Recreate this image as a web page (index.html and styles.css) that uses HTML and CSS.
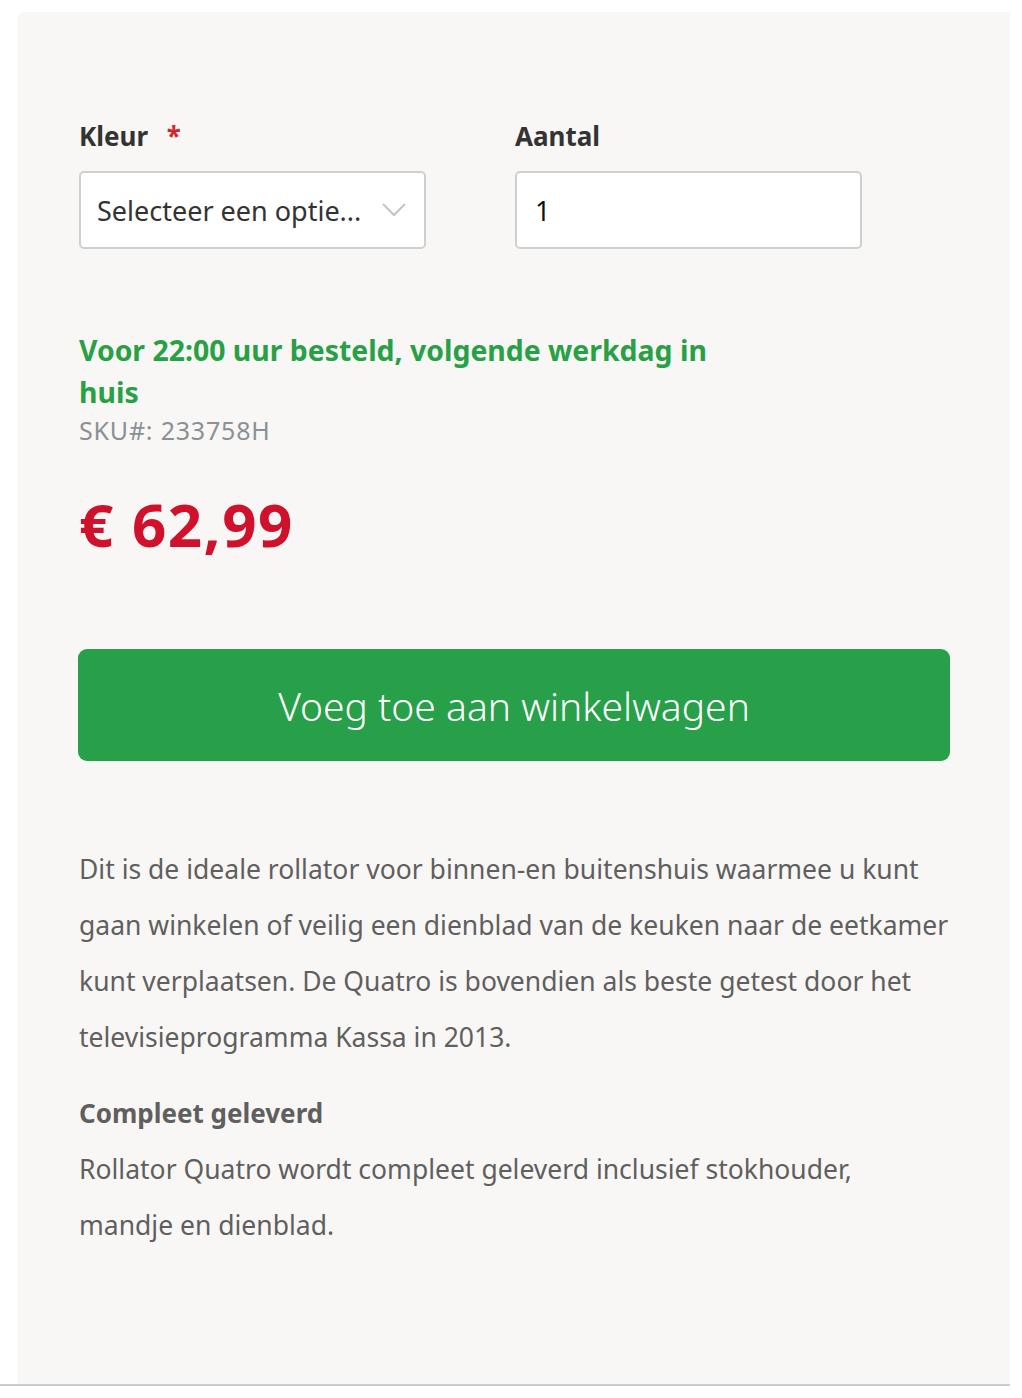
FILE: index.html
```html
<!DOCTYPE html>
<html lang="nl">
<head>
<meta charset="utf-8">
<title>Product</title>
<link rel="stylesheet" href="styles.css">
</head>
<body>
<div class="panel">
  <div class="fields">
    <div class="field field-color">
      <div class="label">Kleur <span class="req">*</span></div>
      <div class="select">
        <span class="select-text">Selecteer een optie...</span>
        <svg class="chev" width="24" height="14" viewBox="0 0 24 14"><path d="M1 1 L12 12 L23 1" fill="none" stroke="#c4c4c4" stroke-width="2"/></svg>
      </div>
    </div>
    <div class="field field-qty">
      <div class="label">Aantal</div>
      <div class="input">1</div>
    </div>
  </div>
  <div class="delivery">Voor 22:00 uur besteld, volgende werkdag in huis</div>
  <div class="sku">SKU#: 233758H</div>
  <div class="price">€ 62,99</div>
  <button class="cart-btn">Voeg toe aan winkelwagen</button>
  <p class="desc">Dit is de ideale rollator voor binnen-en buitenshuis waarmee u kunt gaan winkelen of veilig een dienblad van de keuken naar de eetkamer kunt verplaatsen. De Quatro is bovendien als beste getest door het televisieprogramma Kassa in 2013.</p>
  <h3 class="subhead">Compleet geleverd</h3>
  <p class="desc desc-last">Rollator Quatro wordt compleet geleverd inclusief stokhouder, mandje en dienblad.</p>
</div>
<div class="rule"></div>
</body>
</html>
```
FILE: styles.css
```css
* { box-sizing: border-box; }
html, body { margin: 0; padding: 0; background: #ffffff; }
body { font-family: "Noto Sans", "Open Sans", sans-serif; color: #333; }

.panel {
  margin: 12px 12px 0 18px;
  background: #f8f7f5;
  border-top-left-radius: 6px;
  padding: 107px 60px 0 61px;
  height: 1372px;
}

.fields { display: flex; gap: 89px; }
.field { width: 347px; }
.label {
  font-size: 26px;
  font-weight: 700;
  line-height: 34px;
  color: #333;
  margin-bottom: 18px;
}
.req { color: #d8232a; margin-left: 12px; }

.select, .input {
  height: 78px;
  background: #fff;
  border: 2px solid #cfcfcf;
  border-radius: 5px;
  display: flex;
  align-items: center;
  font-size: 27px;
  color: #333;
}
.select { padding: 0 18px 0 16px; justify-content: space-between; }
.select-text { white-space: nowrap; }
.input { padding: 0 18px; color: #111; }
.chev { flex: none; }

.delivery {
  margin-top: 80px;
  max-width: 680px;
  font-size: 28.4px;
  font-weight: 700;
  line-height: 42px;
  color: #27a046;
}
.sku {
  font-size: 25px;
  letter-spacing: 0.8px;
  line-height: 34px;
  color: #8b9095;
}
.price {
  margin-top: 42px;
  font-size: 60px;
  letter-spacing: 1.5px;
  font-weight: 700;
  line-height: 70px;
  color: #d0112b;
}
.cart-btn {
  display: block;
  margin: 90px 0 0 -1px;
  width: 872px;
  height: 112px;
  border: 0;
  border-radius: 9px;
  background: #28a04a;
  color: #fff;
  font-family: inherit;
  font-size: 39px;
  font-weight: 300;
}
.desc {
  margin: 80px 0 0;
  font-size: 26.5px;
  line-height: 56px;
  color: #5f5f5f;
}
.subhead {
  margin: 20px 0 0;
  font-size: 26px;
  line-height: 56px;
  font-weight: 700;
  color: #5f5f5f;
}
.desc-last { margin-top: 0; max-width: 820px; }

.rule {
  width: 1010px;
  height: 2px;
  background: #cccccc;
}
```
